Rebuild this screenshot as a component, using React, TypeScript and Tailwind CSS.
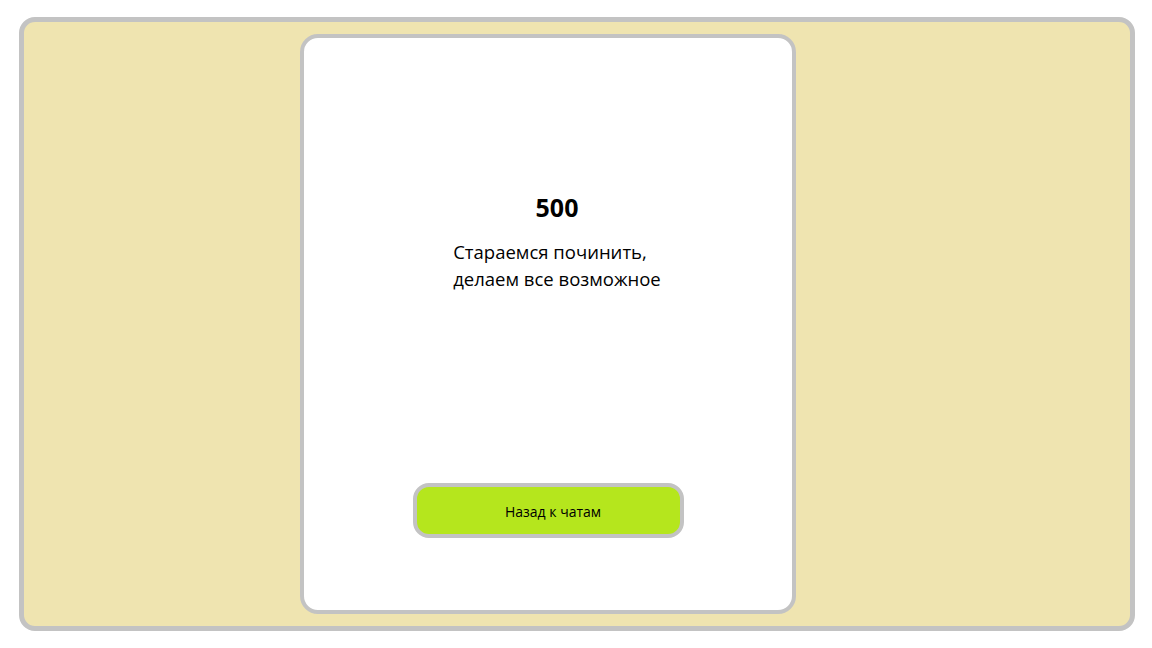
export default function App() {
  return (
    <div className="w-[1152px] h-[648px] bg-white pt-[17px] pl-[19px] font-['Open_Sans',sans-serif]">
      {/* Outer frame */}
      <div className="w-[1116px] h-[614px] rounded-[16px] border-[5px] border-[#c3c3c3] bg-[#efe4b0] pt-[12px] pl-[276px]">
        {/* Error card */}
        <div className="w-[496px] h-[580px] rounded-[18px] border-4 border-[#c3c3c3] bg-white flex flex-col items-center">
          <div className="mt-[152px] ml-[18px] flex flex-col items-center">
            <h1 className="text-[25px] leading-[34px] font-bold text-black">500</h1>
            <p className="mt-[14px] text-[18.5px] leading-[27px] text-black">
              Стараемся починить,
              <br />
              делаем все возможное
            </p>
          </div>
          <button className="mt-auto mb-[72px] w-[271px] h-[55px] rounded-[16px] border-4 border-[#c3c3c3] bg-[#b5e61d] pl-[10px] pt-[2px] text-[14px] text-black">
            Назад к чатам
          </button>
        </div>
      </div>
    </div>
  );
}
